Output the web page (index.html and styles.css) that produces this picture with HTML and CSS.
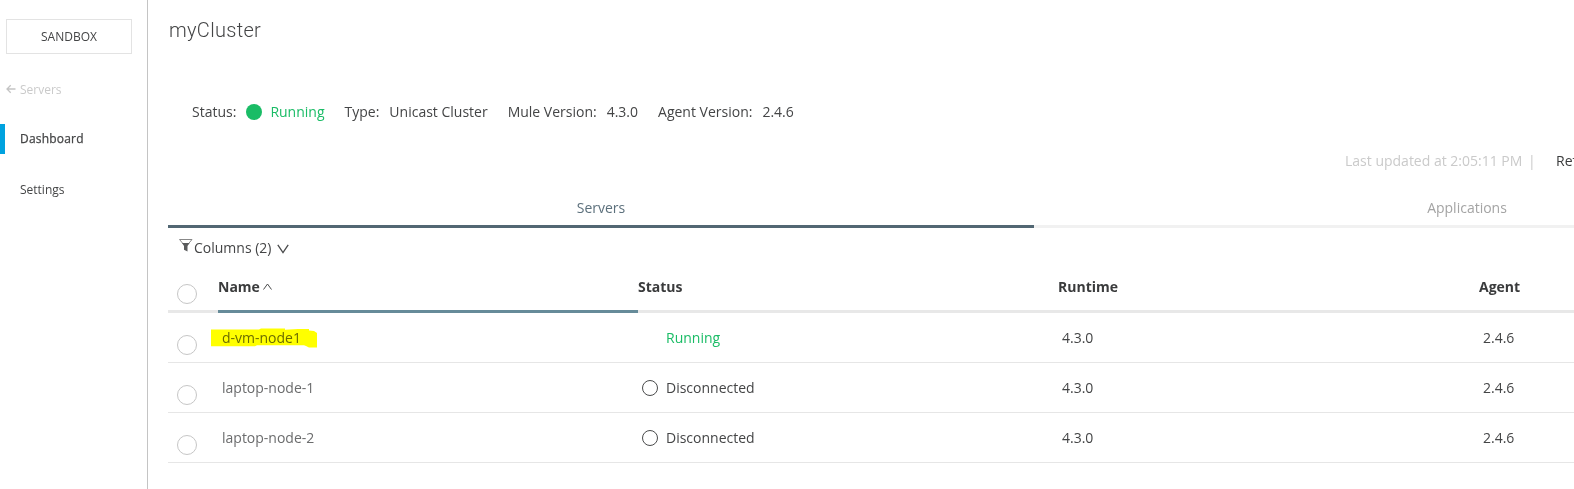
FILE: index.html
```html
<!DOCTYPE html>
<html lang="en">
<head>
<meta charset="utf-8">
<title>myCluster</title>
<link rel="stylesheet" href="styles.css">
</head>
<body>
<div class="app">
  <nav class="sidebar">
    <div class="env">SANDBOX</div>
    <a class="back"><svg width="10" height="10" viewBox="0 0 10 10"><path d="M9.500 5H1M4.700 1.200L1 5l3.700 3.800"/></svg>Servers</a>
    <a class="nav active">Dashboard</a>
    <a class="nav settings">Settings</a>
  </nav>
  <main class="main">
    <h1 class="title">myCluster</h1>
    <div class="info">
      <span class="label">Status:</span><i class="dot"></i><span class="val ok">Running</span>
      <span class="label">Type:</span><span class="val type">Unicast Cluster</span>
      <span class="label">Mule Version:</span><span class="val mule">4.3.0</span>
      <span class="label">Agent Version:</span><span>2.4.6</span>
    </div>
    <div class="updated"><span class="time">Last updated at 2:05:11 PM</span><span class="sep">|</span><a class="refresh">Refresh</a></div>
    <div class="tabs"><div class="tab current">Servers</div><div class="tab">Applications</div></div>
    <div class="columns">
      <svg class="funnel" width="14" height="13" viewBox="0 0 14 13"><path class="rim" d="M.5.500h12.500L8.800 5.500M.5.500l4.200 5"/><path class="fill" d="M3 4h7.600L8.500 7v5.500L5 10.800V7z"/></svg>
      <span>Columns (2)</span>
      <svg class="chev" width="12" height="10" viewBox="0 0 12 10"><path d="M.8.800L6 8.500 11.200.800"/></svg>
    </div>
    <div class="row head">
      <div class="pick"><i class="check"></i></div>
      <div class="cell sorted">Name<svg class="sort" width="9" height="7" viewBox="0 0 9 7"><path d="M.5 6.500l4-5.500 4 5.500"/></svg></div>
      <div class="cell">Status</div><div class="cell">Runtime</div><div class="cell">Agent</div>
    </div>
    <div class="row">
      <div class="pick"><i class="check"></i></div>
      <div class="cell name"><svg class="marker" width="106" height="20" viewBox="0 0 106 20"><path d="M0 1.500h48l2-1h24v1.200l13-.700h11v1.500l5 .5 3 2v14.500h-8l-3-1.500-2-.8H46l-2 1H0z"/></svg>d-vm-node1</div>
      <div class="cell"><i class="state none"></i><span class="ok">Running</span></div><div class="cell">4.3.0</div><div class="cell">2.4.6</div>
    </div>
    <div class="row">
      <div class="pick"><i class="check"></i></div>
      <div class="cell name">laptop-node-1</div>
      <div class="cell"><i class="state"></i><span>Disconnected</span></div><div class="cell">4.3.0</div><div class="cell">2.4.6</div>
    </div>
    <div class="row">
      <div class="pick"><i class="check"></i></div>
      <div class="cell name">laptop-node-2</div>
      <div class="cell"><i class="state"></i><span>Disconnected</span></div><div class="cell">4.3.0</div><div class="cell">2.4.6</div>
    </div>
  </main>
</div>
</body>
</html>
```
FILE: styles.css
```css
* { box-sizing: border-box; }
body { margin: 0; overflow: hidden; background: #fff; color: #444546; font: 14px/20px "Open Sans", sans-serif; }
svg { fill: none; stroke: #4a4b4c; flex: none; }
.app { display: flex; height: 489px; overflow: hidden; }
.sidebar { flex: none; width: 148px; border-right: 1px solid #c4c4c4; padding-top: 19px; font-size: 12px; line-height: 18px; display: flex; flex-direction: column; }
.env { width: 126px; height: 35px; margin-left: 6px; border: 1px solid #e3e3e3; text-align: center; line-height: 33px; }
.back { display: flex; align-items: center; margin-top: 27px; padding-left: 6px; gap: 4px; color: #cacaca; }
.back svg { stroke: #c4c4c4; stroke-width: 1.3; margin-top: -3px; }
.nav { padding-left: 20px; line-height: 30px; height: 30px; }
.active { margin-top: 25px; border-left: 5px solid #00a2df; padding-left: 15px; -webkit-text-stroke: .25px #444546; letter-spacing: .2px; }
.settings { margin-top: 21px; }
.main { flex: none; width: 1752px; padding-left: 20px; }
.title { margin: 18px 0 0 1px; font: 300 20px/24px Roboto, sans-serif; letter-spacing: .3px; }
.info { display: flex; align-items: center; margin-top: 60px; padding-left: 24px; height: 20px; }
.label { margin-right: 10px; }
.dot { width: 16px; height: 16px; border-radius: 50%; background: #1abc66; margin-right: 8px; }
.val { margin-right: 20px; }
.ok { color: #1abc66; }
.updated { display: flex; margin-top: 29px; padding-left: 1177px; color: #cacaca; }
.time { width: 183px; white-space: nowrap; }
.sep { width: 28px; }
.refresh { color: #3a3b3c; }
.tabs { display: flex; width: 1732px; margin-top: 27px; }
.tab { flex: 1; height: 30px; text-align: center; border-bottom: 3px solid #f1f1f1; color: #a4a4a4; }
.current { border-color: #526773; color: #5c707c; }
.columns { display: flex; height: 20px; margin-top: 10px; padding-left: 11px; }
.funnel { margin: 1px 1px 0 0; }
.funnel .rim { stroke: #888; }
.funnel .fill { fill: #5a5b5c; stroke: none; }
.chev { margin: 6px 0 0 6px; stroke-width: 1.3; }
.row { display: flex; width: 1732px; height: 50px; border-bottom: 1px solid #e6e6e6; }
.pick { flex: none; width: 50px; padding: 22px 0 0 9px; }
.check { display: block; width: 20px; height: 20px; border: 1px solid #c6c6c6; border-radius: 50%; }
.cell { flex: none; display: flex; align-items: center; width: 421px; height: 49px; padding: 0 0 0 4px; position: relative; }
.cell:nth-child(2), .cell:nth-child(3) { width: 420px; }
.name { color: #6b6c6d; }
.state { width: 16px; height: 16px; border: 1.500px solid #4a4b4c; border-radius: 50%; margin-right: 8px; }
.none { border-color: transparent; }
.head { height: 55px; border: 0; font-weight: 700; }
.head .pick { padding-top: 26px; border-bottom: 3px solid #e8e8e8; }
.head .cell { height: 55px; padding: 6px 0 0; border-bottom: 3px solid #e8e8e8; color: #3a3b3c; }
.head .sorted { border-color: #668b99; }
.sort { margin: 0 0 1px 3px; }
.marker { position: absolute; left: -7px; top: 15px; fill: #ff0; stroke: none; mix-blend-mode: multiply; }
```
